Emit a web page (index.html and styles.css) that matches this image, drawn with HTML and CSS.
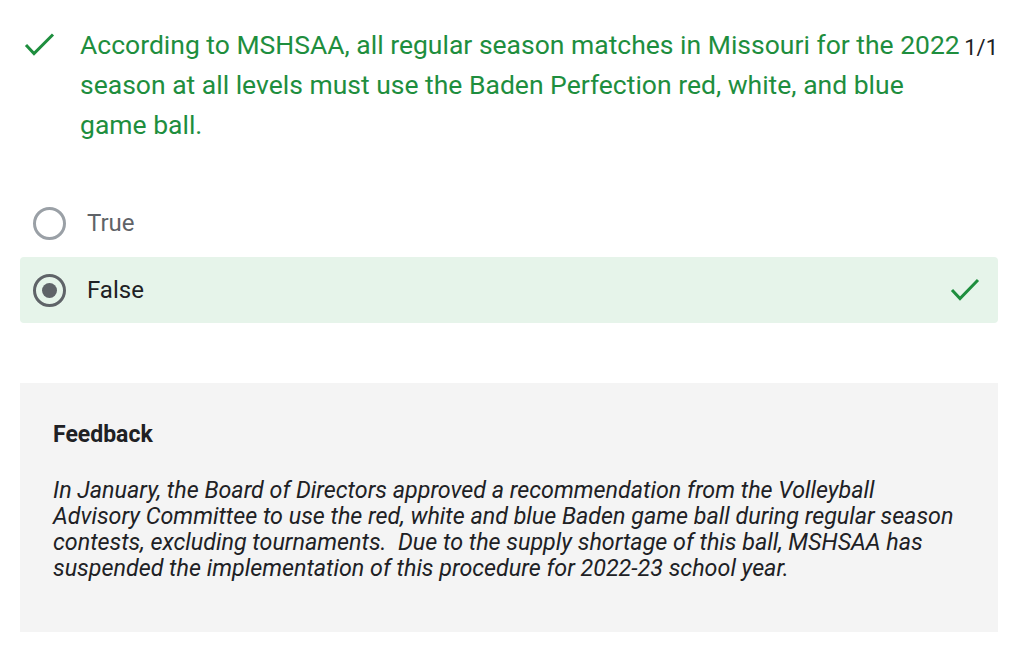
FILE: index.html
```html
<!DOCTYPE html>
<html lang="en">
<head>
<meta charset="utf-8">
<title>Quiz result</title>
<link rel="stylesheet" href="styles.css">
</head>
<body>
<div class="quiz">
  <div class="question">
    <div class="q-icon">
      <svg width="32" height="26" viewBox="0 0 32 26"><polyline points="2,12 10,20.5 29,1.5" fill="none" stroke="#1e8e3e" stroke-width="3"/></svg>
    </div>
    <div class="q-text">According to MSHSAA, all regular season matches in Missouri for the 2022 season at all levels must use the Baden Perfection red, white, and blue game ball.</div>
    <div class="q-score">1/1</div>
  </div>
  <div class="options">
    <div class="option">
      <span class="radio"></span>
      <span class="opt-label muted">True</span>
    </div>
    <div class="option correct">
      <span class="radio checked"></span>
      <span class="opt-label">False</span>
      <svg class="opt-check" width="30" height="24" viewBox="0 0 30 24"><polyline points="2,12 10,20.5 28,2" fill="none" stroke="#1e8e3e" stroke-width="3"/></svg>
    </div>
  </div>
  <div class="feedback">
    <div class="fb-title">Feedback</div>
    <div class="fb-body">In January, the Board of Directors approved a recommendation from the Volleyball Advisory Committee to use the red, white and blue Baden game ball during regular season contests, excluding tournaments.&nbsp; Due to the supply shortage of this ball, MSHSAA has suspended the implementation of this procedure for 2022-23 school year.</div>
  </div>
</div>
</body>
</html>
```

FILE: styles.css
```css
html, body {
  margin: 0;
  padding: 0;
  background: #ffffff;
}
body {
  font-family: Roboto, "Liberation Sans", Arial, sans-serif;
  color: #202124;
}
.quiz {
  padding: 25px 26px 0 20px;
}
.question {
  display: flex;
  align-items: flex-start;
}
.q-icon {
  width: 60px;
  flex: none;
}
.q-icon svg {
  display: block;
  margin: 8px 0 0 4px;
}
.q-text {
  flex: 1;
  font-size: 26.5px;
  line-height: 40px;
  color: #1e8e3e;
}
.q-score {
  flex: none;
  margin-left: 2px;
  font-size: 22px;
  line-height: 40px;
  padding-top: 3px;
  color: #202124;
}
.options {
  margin-top: 45px;
  display: flex;
  flex-direction: column;
  gap: 1px;
}
.option {
  height: 66px;
  display: flex;
  align-items: center;
  padding: 0 18px 0 13px;
  border-radius: 4px;
}
.option.correct {
  background: #e6f4ea;
}
.radio {
  width: 27px;
  height: 27px;
  border: 3px solid #9aa0a6;
  border-radius: 50%;
  flex: none;
  display: flex;
  align-items: center;
  justify-content: center;
}
.radio.checked {
  border-color: #5f6368;
}
.radio.checked::after {
  content: "";
  width: 15px;
  height: 15px;
  border-radius: 50%;
  background: #5f6368;
}
.opt-label {
  margin-left: 21px;
  font-size: 24px;
  flex: 1;
  color: #202124;
}
.opt-label.muted {
  color: #5f6368;
}
.opt-check {
  display: block;
  flex: none;
}
.feedback {
  margin-top: 60px;
  background: #f4f4f4;
  padding: 39px 33px 51px 33px;
}
.fb-title {
  font-weight: bold;
  font-size: 23px;
  line-height: 26px;
  color: #202124;
}
.fb-body {
  margin-top: 29px;
  font-style: italic;
  font-size: 23.3px;
  line-height: 26px;
  color: #202124;
}
```
